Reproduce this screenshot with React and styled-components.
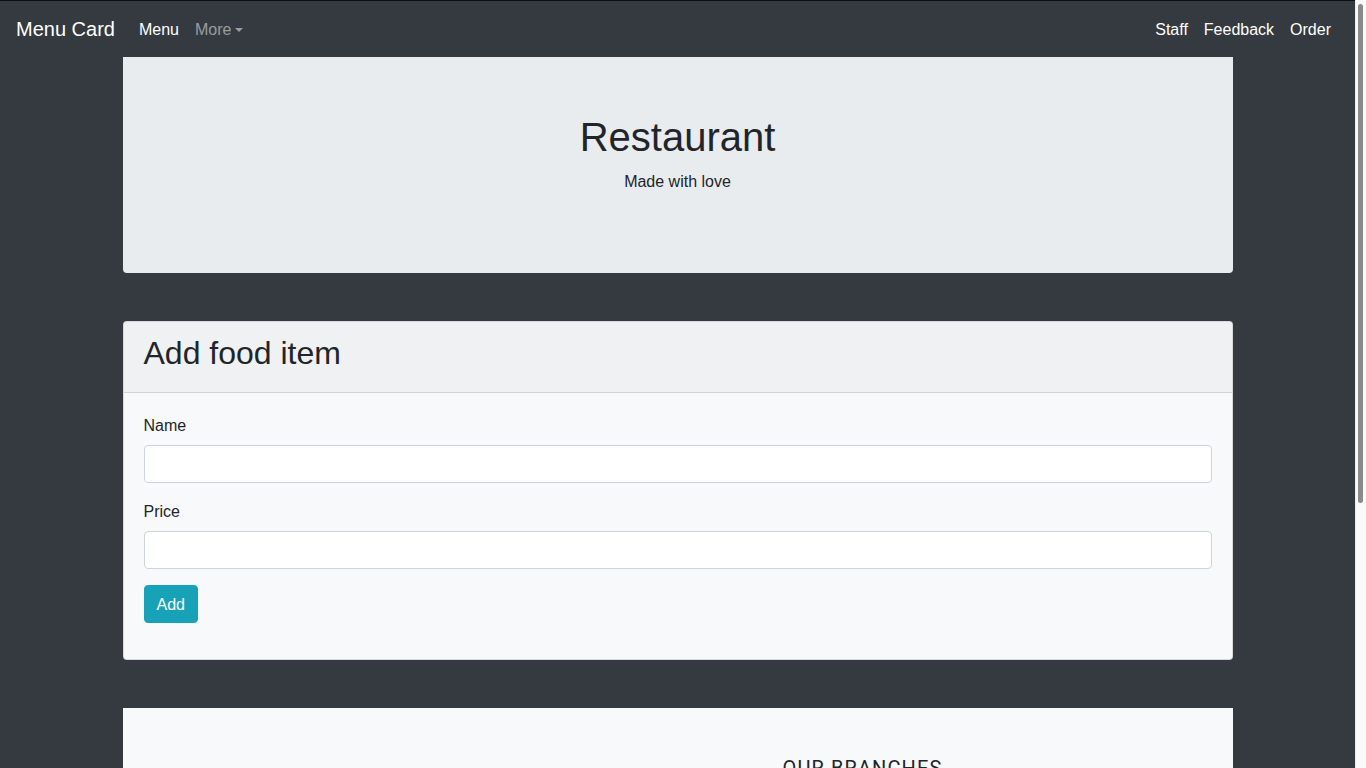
import React from "react";
import styled, { createGlobalStyle } from "styled-components";

const GlobalStyle = createGlobalStyle`
  html, body {
    margin: 0;
    padding: 0;
  }
  body {
    background: #343a40;
    color: #212529;
    font-family: "Liberation Sans", Arial, sans-serif;
    font-size: 16px;
    line-height: 1.5;
    margin-right: 11px;
  }
  * { box-sizing: border-box; }
`;

/* Drawing of the browser's vertical scrollbar, lying over the page edge */
const ScrollTrack = styled.div`
  position: fixed;
  top: 0;
  right: 0;
  width: 11px;
  height: 100vh;
  background: #fafafa;
  border-left: 1px solid #ececec;
`;

const ScrollThumb = styled.div`
  position: absolute;
  top: 4px;
  left: 2px;
  width: 5px;
  height: 499px;
  background: #8a8a8a;
  border-radius: 3px;
`;

const Navbar = styled.nav`
  display: flex;
  align-items: center;
  justify-content: space-between;
  height: 57px;
  padding: 1px 16px 0;
  background: #343a40;
  border-top: 1px solid #0c0d0e;
`;

const NavGroup = styled.div`
  display: flex;
  align-items: center;
`;

const Brand = styled.a`
  font-size: 20px;
  line-height: 30px;
  padding: 4px 0 6px;
  margin-right: 16px;
  color: #fff;
  text-decoration: none;
`;

const NavLink = styled.a`
  display: inline-flex;
  align-items: center;
  padding: 8px;
  font-size: 16px;
  line-height: 24px;
  text-decoration: none;
  color: ${(p) => (p.$muted ? "rgba(255,255,255,0.5)" : "#fff")};
`;

const Caret = styled.span`
  display: inline-block;
  margin-left: 4px;
  margin-top: 1px;
  border-top: 4.5px solid currentColor;
  border-left: 4.5px solid transparent;
  border-right: 4.5px solid transparent;
`;

const Container = styled.main`
  max-width: 1140px;
  margin: 0 auto;
  padding: 0 15px;
`;

const Jumbotron = styled.section`
  background: #e9ecef;
  border-radius: 0 0 4px 4px;
  padding: 56px 32px 79px;
  text-align: center;
  margin-bottom: 48px;
`;

const Title = styled.h1`
  margin: 0 0 9px;
  font-size: 40px;
  line-height: 48px;
  font-weight: 400;
  color: #212529;
`;

const Subtitle = styled.p`
  margin: 0;
  font-size: 16px;
  line-height: 24px;
`;

const Card = styled.section`
  background: #f8f9fa;
  border: 1px solid rgba(0, 0, 0, 0.125);
  border-radius: 4px;
  margin-bottom: 48px;
  overflow: hidden;
`;

const CardHeader = styled.div`
  background: rgba(0, 0, 0, 0.03);
  border-bottom: 1px solid rgba(0, 0, 0, 0.125);
  padding: 12px 20px;
`;

const CardTitle = styled.h2`
  margin: 0 0 8px;
  font-size: 32px;
  line-height: 38.4px;
  font-weight: 400;
  color: #212529;
`;

const CardBody = styled.form`
  padding: 20px 20px 36px;
`;

const FormGroup = styled.div`
  margin-bottom: 16px;
`;

const Label = styled.label`
  display: block;
  padding-top: 1px;
  margin-bottom: 7px;
  font-size: 16px;
  line-height: 24px;
`;

const Input = styled.input`
  display: block;
  width: 100%;
  height: 38px;
  padding: 6px 12px;
  font-family: inherit;
  font-size: 16px;
  background: #fff;
  border: 1px solid #ced4da;
  border-radius: 4px;
  outline: none;
`;

const Button = styled.button`
  display: inline-block;
  height: 38px;
  padding: 7px 12px 5px;
  font-family: inherit;
  font-size: 16px;
  line-height: 24px;
  color: #fff;
  background: #17a2b8;
  border: 1px solid #17a2b8;
  border-radius: 4px;
  cursor: pointer;
`;

const Footer = styled.section`
  background: #f8f9fa;
  min-height: 436px;
  margin-bottom: 32px;
  display: grid;
  grid-template-columns: 555px 370px 1fr;
  padding-top: 48px;
`;

const Column = styled.div`
  padding: 0 15px;
  text-align: ${(p) => (p.$center ? "center" : "left")};
`;

const SectionHeading = styled.h5`
  margin: 0;
  font-family: Roboto, "Liberation Sans", sans-serif;
  font-size: 20px;
  line-height: 24px;
  letter-spacing: 1.1px;
  font-weight: 400;
  color: #212529;
`;

export default function App() {
  return (
    <>
      <GlobalStyle />
      <Navbar>
        <NavGroup>
          <Brand href="#">Menu Card</Brand>
          <NavLink href="#">Menu</NavLink>
          <NavLink href="#" $muted>
            More
            <Caret />
          </NavLink>
        </NavGroup>
        <NavGroup>
          <NavLink href="#">Staff</NavLink>
          <NavLink href="#">Feedback</NavLink>
          <NavLink href="#">Order</NavLink>
        </NavGroup>
      </Navbar>
      <Container>
        <Jumbotron>
          <Title>Restaurant</Title>
          <Subtitle>Made with love</Subtitle>
        </Jumbotron>
        <Card>
          <CardHeader>
            <CardTitle>Add food item</CardTitle>
          </CardHeader>
          <CardBody onSubmit={(e) => e.preventDefault()}>
            <FormGroup>
              <Label htmlFor="name">Name</Label>
              <Input id="name" type="text" />
            </FormGroup>
            <FormGroup>
              <Label htmlFor="price">Price</Label>
              <Input id="price" type="text" />
            </FormGroup>
            <Button type="submit">Add</Button>
          </CardBody>
        </Card>
        <Footer>
          <Column />
          <Column $center>
            <SectionHeading>OUR BRANCHES</SectionHeading>
          </Column>
          <Column />
        </Footer>
      </Container>
      <ScrollTrack>
        <ScrollThumb />
      </ScrollTrack>
    </>
  );
}
